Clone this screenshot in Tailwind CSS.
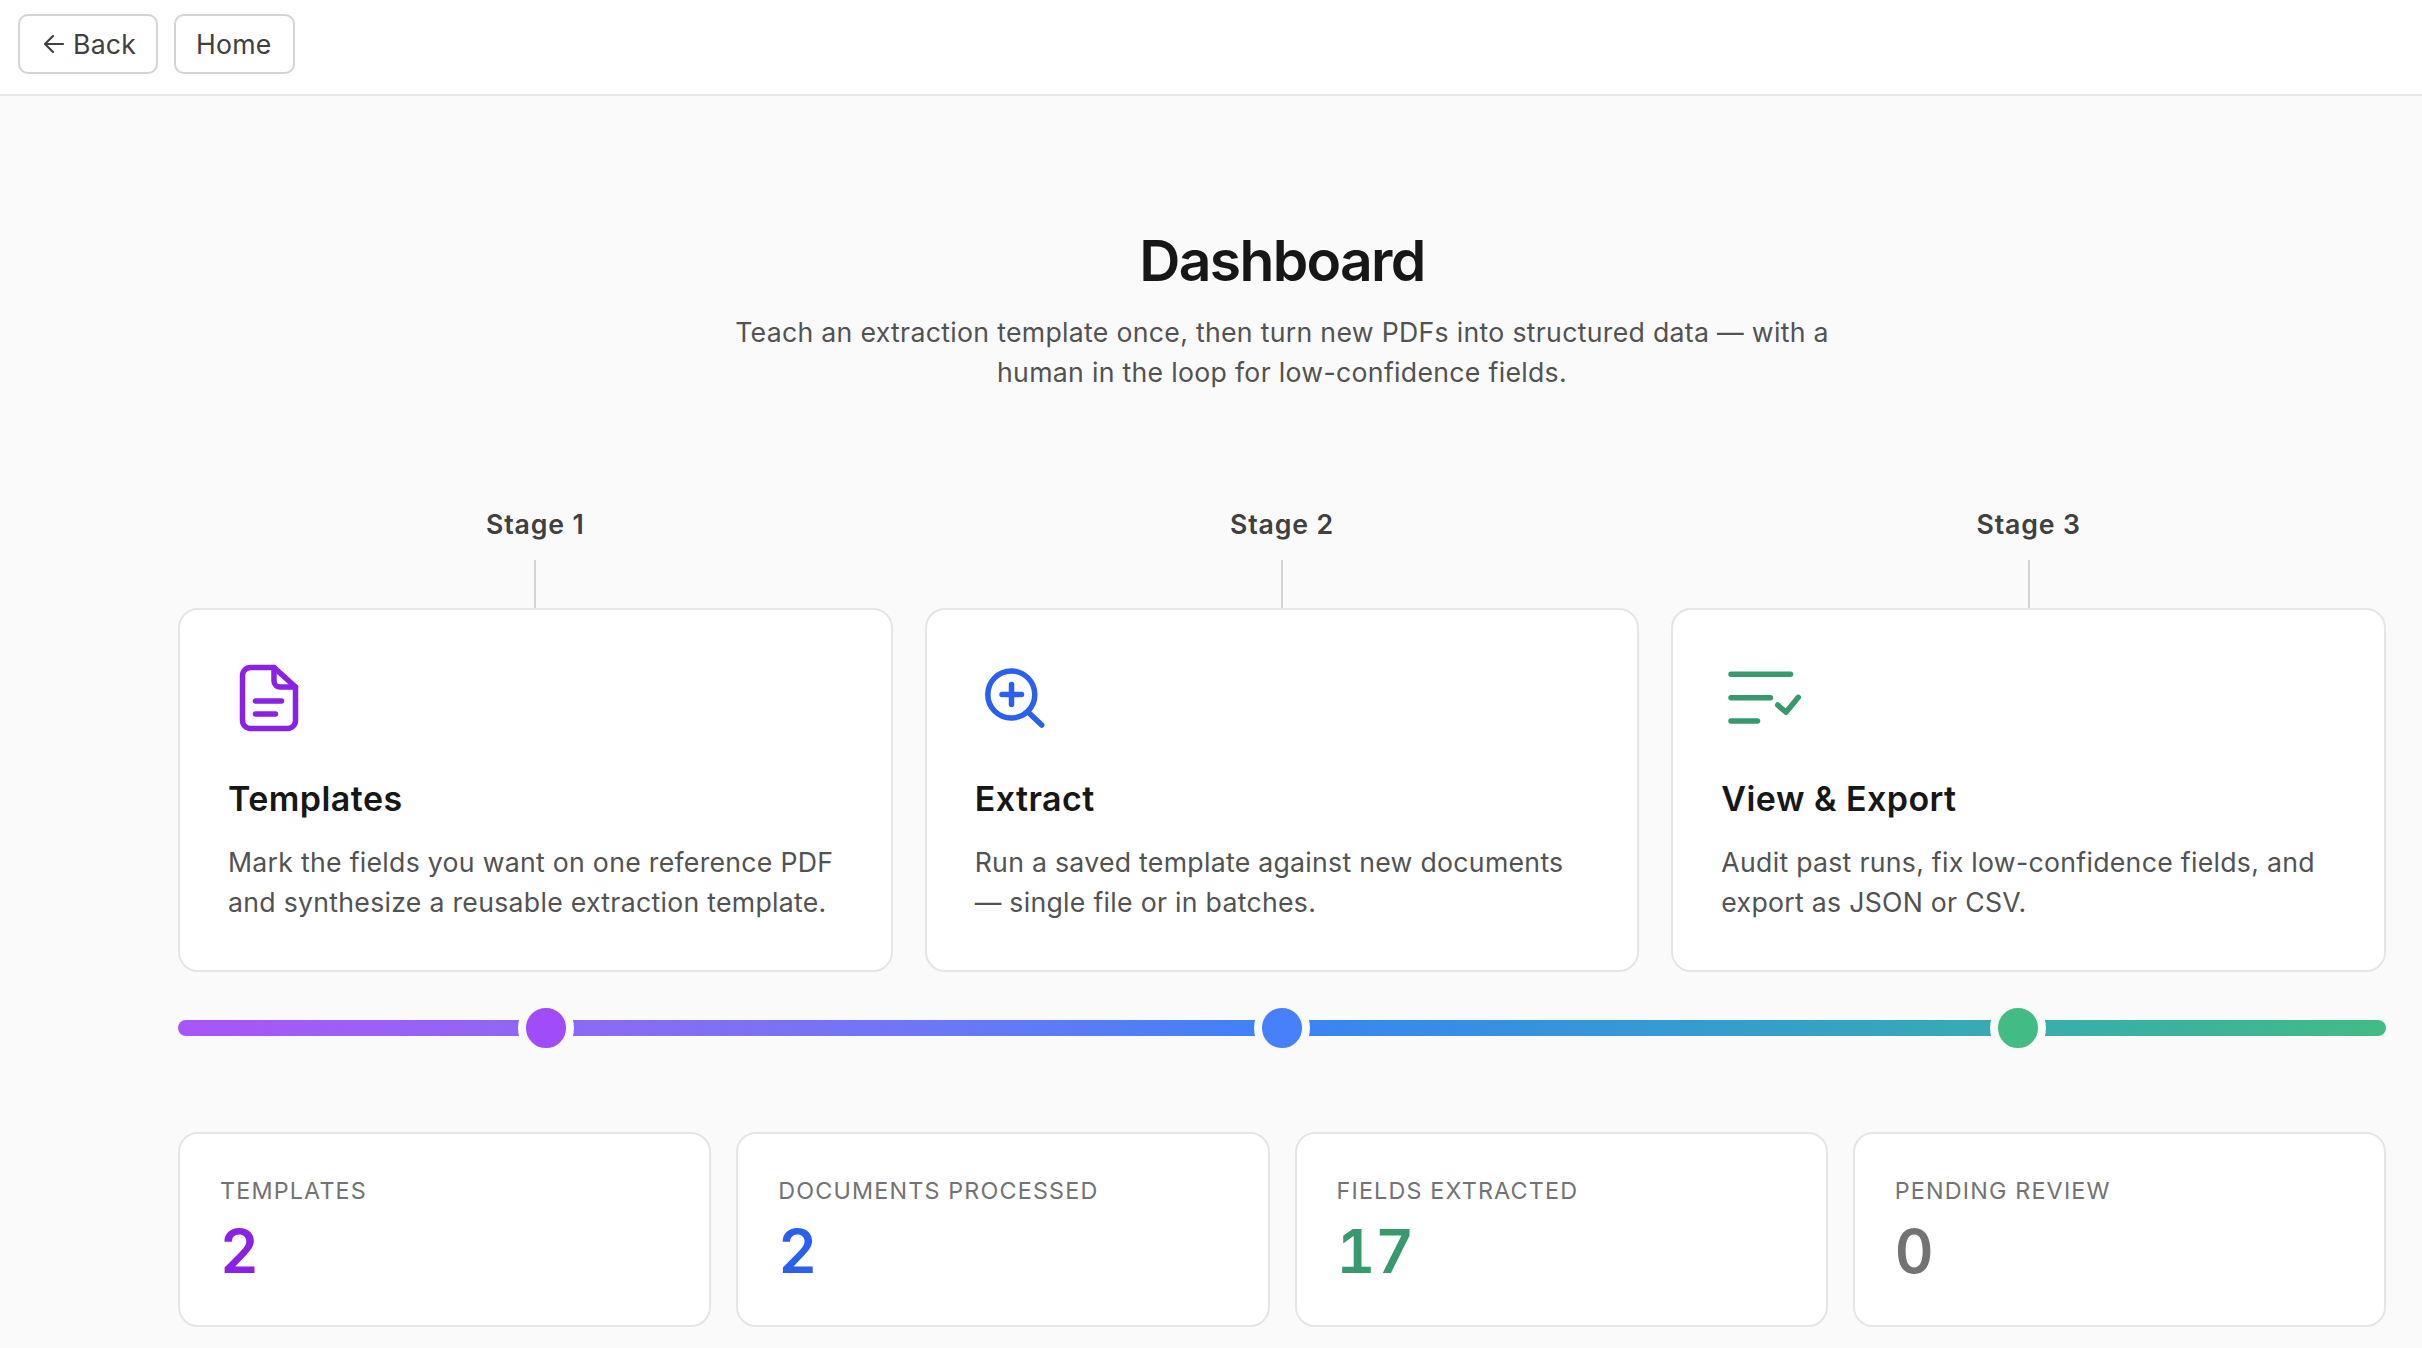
<!doctype html>
<html><head><meta charset="utf-8"><script src="https://cdn.jsdelivr.net/npm/@tailwindcss/browser@4"></script></head>
<body class="m-0">
<div class="h-screen overflow-hidden bg-[#fafafa] font-['Inter',sans-serif] text-[#171717]">
  <header class="flex h-[96px] items-start gap-[16px] border-b-2 border-[#e5e5e5] bg-white pl-[18px] pt-[14px]">
    <button class="flex h-[60px] items-center gap-[7px] rounded-[10px] border-2 border-[#d4d4d4] bg-white pl-[22px] pr-[20px] text-[26.67px] tracking-[0.2px] text-[#404040]">
      <svg class="h-[24px] w-[24px]" viewBox="0 0 24 24" fill="none" stroke="#404040" stroke-width="2.2" stroke-linecap="round" stroke-linejoin="round"><path d="M21 12H3M11 4l-8 8 8 8"/></svg>
      Back
    </button>
    <button class="flex h-[60px] items-center rounded-[10px] border-2 border-[#d4d4d4] bg-white pl-[20px] pr-[21px] text-[26.67px] tracking-[0.2px] text-[#404040]">Home</button>
  </header>
  <main class="pl-[178px] pr-[36px]">
    <h1 class="mt-[133px] text-center text-[57px] font-semibold leading-[64px] tracking-[-1.7px] text-[#171717]">Dashboard</h1>
    <p class="mx-auto mt-[19px] w-[1166px] text-center text-[26.67px] leading-[40px] tracking-[0.3px] text-[#525252]">Teach an extraction template once, then turn new PDFs into structured data — with a human in the loop for low-confidence fields.</p>

    <div class="mt-[112px] grid grid-cols-3 gap-[32px]">
      <section class="flex flex-col items-center">
        <div class="text-[26.67px] font-semibold leading-[40px] tracking-[0.85px] text-[#404040]">Stage 1</div>
        <div class="mt-[16px] h-[48px] w-[2px] bg-[#d4d4d4]"></div>
        <div class="w-full rounded-[20px] border-2 border-[#e5e5e5] bg-white px-[48px] pb-[48px] pt-[49px]">
          <svg class="ml-[1.5px] block h-[80px] w-[80px]" viewBox="0 0 80 80" fill="none" stroke="#8a22e6" stroke-width="5.5" stroke-linecap="round" stroke-linejoin="round"><path d="M20.5 8.5H44L65.5 28V61.5a8 8 0 0 1-8 8H20.5a8 8 0 0 1-8-8V16.5a8 8 0 0 1 8-8Z"/><path d="M44 8.5V22a6 6 0 0 0 6 6H65.5"/><path d="M25.5 42H51.5M25.5 55H45.5"/></svg>
          <h2 class="mt-[36px] text-[34px] font-semibold leading-[47px] tracking-[0.45px] text-[#171717]">Templates</h2>
          <p class="mt-[20px] text-[26.67px] leading-[40px] tracking-[0.28px] text-[#525252]">Mark the fields you want on one reference PDF and synthesize a reusable extraction template.</p>
        </div>
      </section>
      <section class="flex flex-col items-center">
        <div class="text-[26.67px] font-semibold leading-[40px] tracking-[0.85px] text-[#404040]">Stage 2</div>
        <div class="mt-[16px] h-[48px] w-[2px] bg-[#d4d4d4]"></div>
        <div class="w-full rounded-[20px] border-2 border-[#e5e5e5] bg-white px-[48px] pb-[48px] pt-[49px]">
          <svg class="ml-[1.5px] block h-[80px] w-[80px]" viewBox="0 0 80 80" fill="none" stroke="#2b5fed" stroke-width="5.5" stroke-linecap="round" stroke-linejoin="round"><circle cx="35.3" cy="35.5" r="23.5"/><path d="M26 35.5H45.5M35.5 25.5V45.5M52 53L65.7 66"/></svg>
          <h2 class="mt-[36px] text-[34px] font-semibold leading-[47px] tracking-[0.45px] text-[#171717]">Extract</h2>
          <p class="mt-[20px] text-[26.67px] leading-[40px] tracking-[0.28px] text-[#525252]">Run a saved template against new documents — single file or in batches.</p>
        </div>
      </section>
      <section class="flex flex-col items-center">
        <div class="text-[26.67px] font-semibold leading-[40px] tracking-[0.85px] text-[#404040]">Stage 3</div>
        <div class="mt-[16px] h-[48px] w-[2px] bg-[#d4d4d4]"></div>
        <div class="w-full rounded-[20px] border-2 border-[#e5e5e5] bg-white px-[48px] pb-[48px] pt-[49px]">
          <svg class="ml-[1.5px] block h-[80px] w-[80px] overflow-visible" viewBox="0 0 80 80" fill="none" stroke="#38996f" stroke-width="5.5" stroke-linecap="round" stroke-linejoin="round"><path d="M8 15.3H67.5M8 38.7H47.5M8 62H34.5M54.7 46L63 53.3L75.3 38.3"/></svg>
          <h2 class="mt-[36px] text-[34px] font-semibold leading-[47px] tracking-[0.45px] text-[#171717]">View &amp; Export</h2>
          <p class="mt-[20px] text-[26.67px] leading-[40px] tracking-[0.28px] text-[#525252]">Audit past runs, fix low-confidence fields, and export as JSON or CSV.</p>
        </div>
      </section>
    </div>

    <div class="relative mt-[48px] h-[16px] rounded-full bg-gradient-to-r from-[#a855f7] via-[#3b82f6] to-[#43bb84]">
      <span class="absolute left-[16.667%] top-1/2 h-[56px] w-[56px] -translate-x-1/2 -translate-y-1/2 rounded-full border-8 border-[#fafafa] bg-[#a04cf8]"></span>
      <span class="absolute left-1/2 top-1/2 h-[56px] w-[56px] -translate-x-1/2 -translate-y-1/2 rounded-full border-8 border-[#fafafa] bg-[#4680fb]"></span>
      <span class="absolute left-[83.333%] top-1/2 h-[56px] w-[56px] -translate-x-1/2 -translate-y-1/2 rounded-full border-8 border-[#fafafa] bg-[#43bb84]"></span>
    </div>

    <div class="mt-[96px] grid grid-cols-4 gap-[25px]">
      <div class="rounded-[20px] border-2 border-[#e5e5e5] bg-white pb-[41px] pl-[40px] pt-[37px]">
        <div class="text-[23.33px] uppercase leading-[40px] tracking-[1.17px] text-[#737373]">Templates</div>
        <div class="mt-[7px] text-[60px] font-semibold leading-[66px] tabular-nums text-[#8a22e6]">2</div>
      </div>
      <div class="rounded-[20px] border-2 border-[#e5e5e5] bg-white pb-[41px] pl-[40px] pt-[37px]">
        <div class="text-[23.33px] uppercase leading-[40px] tracking-[1.17px] text-[#737373]">Documents processed</div>
        <div class="mt-[7px] text-[60px] font-semibold leading-[66px] tabular-nums text-[#2b5fed]">2</div>
      </div>
      <div class="rounded-[20px] border-2 border-[#e5e5e5] bg-white pb-[41px] pl-[40px] pt-[37px]">
        <div class="text-[23.33px] uppercase leading-[40px] tracking-[1.17px] text-[#737373]">Fields extracted</div>
        <div class="mt-[7px] text-[60px] font-semibold leading-[66px] tabular-nums text-[#38996f]">17</div>
      </div>
      <div class="rounded-[20px] border-2 border-[#e5e5e5] bg-white pb-[41px] pl-[40px] pt-[37px]">
        <div class="text-[23.33px] uppercase leading-[40px] tracking-[1.17px] text-[#737373]">Pending review</div>
        <div class="mt-[7px] text-[60px] font-semibold leading-[66px] tabular-nums text-[#737373]">0</div>
      </div>
    </div>
  </main>
</div>
</body></html>
